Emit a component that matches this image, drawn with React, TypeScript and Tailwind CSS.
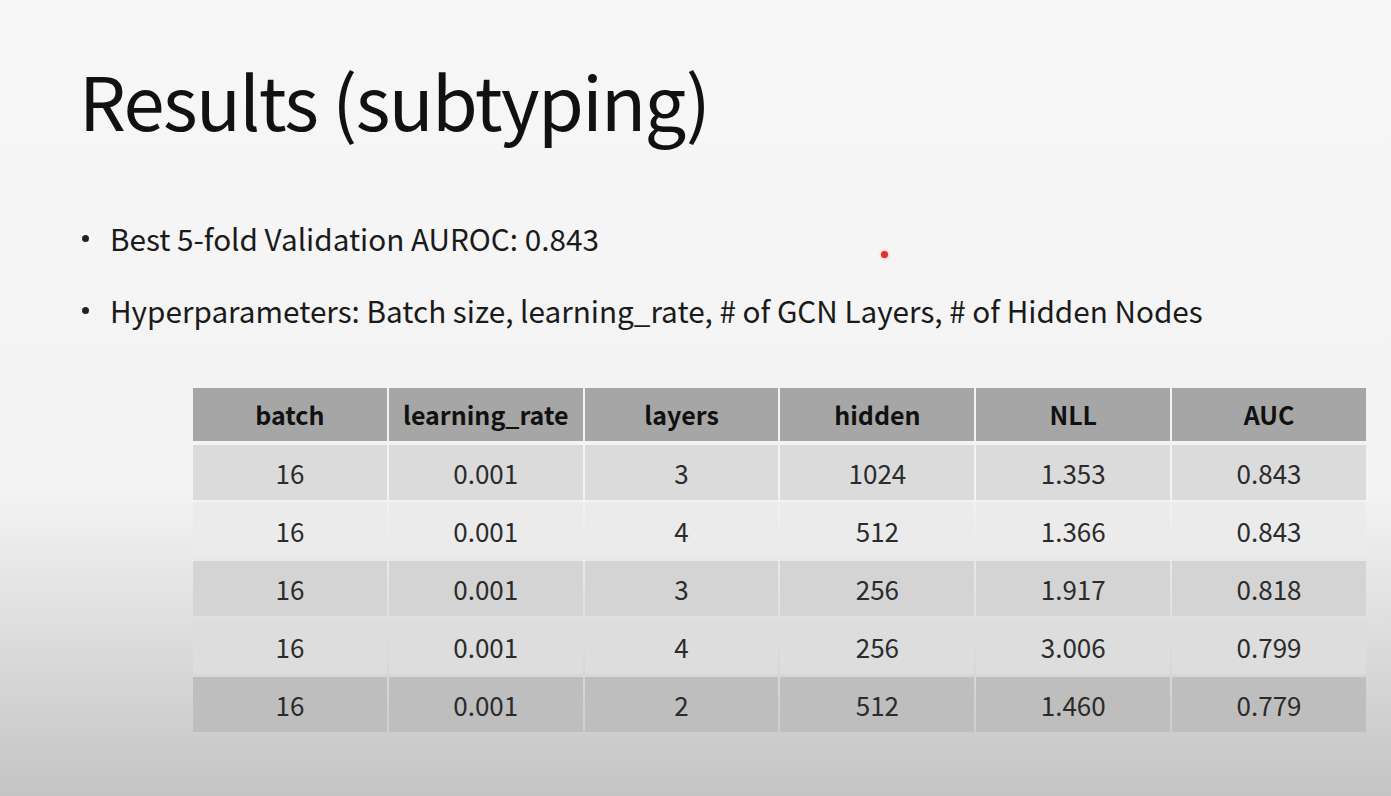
const HEAD = ["batch", "learning_rate", "layers", "hidden", "NLL", "AUC"];

const ROWS: { cells: string[]; bg: string }[] = [
  { cells: ["16", "0.001", "3", "1024", "1.353", "0.843"], bg: "bg-[#dbdbdb]" },
  { cells: ["16", "0.001", "4", "512", "1.366", "0.843"], bg: "bg-[#ebebeb]" },
  { cells: ["16", "0.001", "3", "256", "1.917", "0.818"], bg: "bg-[#d4d4d4]" },
  { cells: ["16", "0.001", "4", "256", "3.006", "0.799"], bg: "bg-[#dddddd]" },
  { cells: ["16", "0.001", "2", "512", "1.460", "0.779"], bg: "bg-[#bebebe]" },
];

function Bullet({ text, className = "" }: { text: string; className?: string }) {
  return (
    <li className={`flex items-center ${className}`}>
      <span className="w-[7px] h-[7px] rounded-full bg-[#222] mr-[21px]" />
      <span>{text}</span>
    </li>
  );
}

export default function App() {
  return (
    <div
      className="relative w-[1391px] h-[796px] overflow-hidden bg-gradient-to-b from-[#f7f7f7] via-[#f3f3f3] via-[62%] to-[#c4c4c4] text-[#111]"
      style={{ fontFamily: '"Noto Sans CJK KR", "Noto Sans", sans-serif' }}
    >
      <div className="pl-[79px] pt-[62px]">
        <h1 className="text-[74px] leading-none font-normal tracking-[-1.6px]">Results (subtyping)</h1>

        <ul className="mt-[88px] pl-[3px] text-[29.7px] leading-none text-[#1a1a1a]">
          <Bullet text="Best 5-fold Validation AUROC: 0.843" />
          <Bullet text="Hyperparameters: Batch size, learning_rate, # of GCN Layers, # of Hidden Nodes" className="mt-[42px]" />
        </ul>
      </div>

      <div className="ml-[193px] mt-[63px] w-[1173px] flex flex-col gap-[3px]">
        <div className="grid grid-cols-6 gap-x-[2px] mb-[1px]">
          {HEAD.map((h) => (
            <div key={h} className="h-[53px] bg-[#a6a6a6] flex items-center justify-center text-[25px] font-bold text-[#111]">
              {h}
            </div>
          ))}
        </div>
        {ROWS.map((r, i) => (
          <div key={i} className="grid grid-cols-6 gap-x-[2px]">
            {r.cells.map((c, j) => (
              <div key={j} className={`h-[55px] ${r.bg} flex items-center justify-center text-[26px] text-[#2b2b2b]`}>
                {c}
              </div>
            ))}
          </div>
        ))}
      </div>

      {/* laser pointer */}
      <div className="absolute left-[881px] top-[251px] w-[7px] h-[7px] rounded-full bg-[#e0302a] shadow-[0_0_3px_#f88]" />
    </div>
  );
}
